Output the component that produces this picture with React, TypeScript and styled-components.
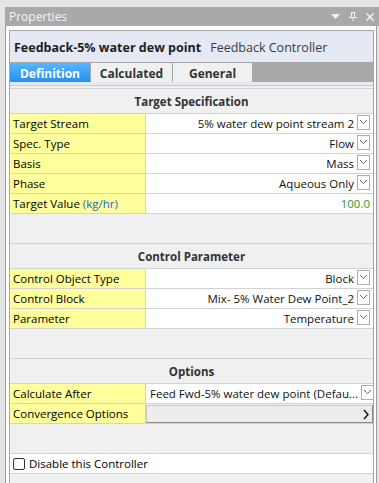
import React from "react";
import styled, { createGlobalStyle } from "styled-components";

const FONT = `"Open Sans", "Noto Sans", sans-serif`;

const Global = createGlobalStyle`
  html, body { margin: 0; padding: 0; background: #e4e4e4; }
  body { font-family: ${FONT}; font-size: 11.5px; color: #000; }
  * { box-sizing: border-box; }
`;

const Page = styled.div`
  width: 379px;
  height: 483px;
  padding: 7px 0 0 5px;
  background: #e4e4e4;
  overflow: hidden;
`;

const TitleBar = styled.div`
  height: 19px;
  background: #a9a9a9;
  color: #f6f6f6;
  display: flex;
  align-items: center;
  padding: 0 5px 0 4px;
  font-size: 12px;
`;

const TitleText = styled.span`
  flex: 1;
`;

const TitleIcons = styled.div`
  display: flex;
  align-items: center;
  gap: 9px;
`;

const Panel = styled.div`
  width: 372px;
  height: 457px;
  background: #fff;
  border-left: 1px solid #9c9c9c;
  border-right: 1px solid #9c9c9c;
  padding: 4px 2px 0 3px;
  display: flex;
  flex-direction: column;
`;

const HeaderBox = styled.div`
  border: 1px solid #a6a6a6;
  border-bottom: none;
  background: #e4e9f4;
  padding-bottom: 3px;
`;

const HeaderTitle = styled.div`
  height: 31px;
  display: flex;
  align-items: center;
  padding: 1px 0 0 4px;
  gap: 9px;
  font-size: 12.5px;
`;

const BoldName = styled.span`
  font-weight: 700;
  color: #1e1e1e;
`;

const SubName = styled.span`
  color: #3c3c3c;
`;

const Tabs = styled.div`
  display: flex;
  height: 20px;
  background: #a9a9a9;
  border-top: 1px solid #a6a6a6;
`;

const Tab = styled.div<{ $active?: boolean; $w: number }>`
  width: ${(p) => p.$w}px;
  display: flex;
  align-items: center;
  justify-content: center;
  padding-top: 1px;
  font-weight: 700;
  font-size: 12px;
  color: ${(p) => (p.$active ? "#fff" : "#333")};
  background: ${(p) =>
    p.$active ? "linear-gradient(#56b6ff, #2590f2)" : "#f0f0f0"};
  border-right: 1px solid #a6a6a6;
`;

const Content = styled.div`
  flex: 1;
  background: #f0f0f0;
  border-left: 1px solid #a6a6a6;
  border-right: 1px solid #a6a6a6;
  border-top: 1px solid #c9c9c9;
  padding-top: 2px;
  display: flex;
  flex-direction: column;
`;

const Section = styled.div<{ $first?: boolean }>`
  margin-top: ${(p) => (p.$first ? 0 : 29)}px;
  border-top: 1px solid #d2d2d2;
`;

const SectionHeader = styled.div`
  height: 25px;
  display: flex;
  align-items: center;
  justify-content: center;
  font-weight: 700;
  color: #333;
  border-bottom: 1px solid #d2d2d2;
`;

const Row = styled.div`
  display: grid;
  grid-template-columns: 136px 1fr;
  height: 20px;
  border-bottom: 1px solid #d2d2d2;
`;

const Label = styled.div`
  background: #ffff9c;
  border-right: 1px solid #d2d2d2;
  display: flex;
  align-items: center;
  padding-left: 3px;
  white-space: nowrap;
`;

const Unit = styled.span`
  color: #1e64d2;
`;

const Value = styled.div<{ $align?: "left" | "right" }>`
  background: #fff;
  display: flex;
  align-items: center;
  justify-content: ${(p) => (p.$align === "left" ? "flex-start" : "flex-end")};
  padding: 0 3px 0 ${(p) => (p.$align === "left" ? 4 : 0)}px;
  min-width: 0;
  white-space: nowrap;
  color: #111;
`;

const ValueText = styled.span<{ $grow?: boolean }>`
  flex: ${(p) => (p.$grow ? 1 : "none")};
`;

const NumberText = styled.span`
  color: #1f9a1f;
`;

const DropButton = styled.div`
  width: 13px;
  height: 15px;
  margin-left: 3px;
  margin-bottom: 3px;
  border: 1px solid #adadad;
  background: #fff;
  display: flex;
  align-items: center;
  justify-content: center;
  flex: none;
`;

const MoreButton = styled.div`
  background: #ececec;
  border: 1px solid #c8c8c8;
  border-right-color: #8c8c8c;
  border-bottom-color: #8c8c8c;
  display: flex;
  align-items: center;
  justify-content: flex-end;
  padding-right: 3px;
  margin: 1px 0 0 0;
`;

const CheckRow = styled.div`
  margin-top: 29px;
  height: 21px;
  background: #fff;
  border-top: 1px solid #d2d2d2;
  border-bottom: 1px solid #d2d2d2;
  display: flex;
  align-items: center;
  padding-left: 3px;
  gap: 4px;
`;

const CheckBox = styled.div`
  width: 12px;
  height: 12px;
  border: 1px solid #333;
  border-radius: 2px;
  background: #fff;
`;

const Chevron = () => (
  <svg width="9" height="6" viewBox="0 0 9 6">
    <polyline points="1,1 4.5,4.5 8,1" fill="none" stroke="#666" strokeWidth="1" />
  </svg>
);

const RightArrow = () => (
  <svg width="6" height="11" viewBox="0 0 6 11">
    <polyline points="1,1 5,5.5 1,10" fill="none" stroke="#111" strokeWidth="1.4" />
  </svg>
);

const DropdownTri = () => (
  <svg width="9" height="5" viewBox="0 0 9 5">
    <polygon points="0,0 9,0 4.5,5" fill="#f4f4f4" />
  </svg>
);

const PinIcon = () => (
  <svg width="8" height="9" viewBox="0 0 8 9">
    <rect x="2.5" y="0.5" width="3" height="5" fill="none" stroke="#f4f4f4" />
    <line x1="0" y1="5.5" x2="8" y2="5.5" stroke="#f4f4f4" />
    <line x1="4" y1="5.5" x2="4" y2="9" stroke="#f4f4f4" />
  </svg>
);

const CloseIcon = () => (
  <svg width="8" height="8" viewBox="0 0 8 8">
    <path d="M0.5 0.5 L7.5 7.5 M7.5 0.5 L0.5 7.5" stroke="#f4f4f4" strokeWidth="1.5" />
  </svg>
);

type RowDef = {
  label: React.ReactNode;
  value: React.ReactNode;
  kind?: "drop" | "number" | "dropLeft" | "more";
};

const renderRow = (r: RowDef, i: number) => {
  let cell: React.ReactNode;
  if (r.kind === "number") {
    cell = (
      <Value>
        <NumberText>{r.value}</NumberText>
      </Value>
    );
  } else if (r.kind === "dropLeft") {
    cell = (
      <Value $align="left">
        <ValueText $grow>{r.value}</ValueText>
        <DropButton>
          <Chevron />
        </DropButton>
      </Value>
    );
  } else if (r.kind === "more") {
    cell = (
      <MoreButton>
        <RightArrow />
      </MoreButton>
    );
  } else {
    cell = (
      <Value>
        <ValueText>{r.value}</ValueText>
        <DropButton>
          <Chevron />
        </DropButton>
      </Value>
    );
  }
  return (
    <Row key={i}>
      <Label>{r.label}</Label>
      {cell}
    </Row>
  );
};

const sections: { title: string; rows: RowDef[] }[] = [
  {
    title: "Target Specification",
    rows: [
      { label: "Target Stream", value: "5% water dew point stream 2" },
      { label: "Spec. Type", value: "Flow" },
      { label: "Basis", value: "Mass" },
      { label: "Phase", value: "Aqueous Only" },
      {
        label: (
          <>
            Target Value&nbsp;<Unit>(kg/hr)</Unit>
          </>
        ),
        value: "100.0",
        kind: "number",
      },
    ],
  },
  {
    title: "Control Parameter",
    rows: [
      { label: "Control Object Type", value: "Block" },
      { label: "Control Block", value: "Mix- 5% Water Dew Point_2" },
      { label: "Parameter", value: "Temperature" },
    ],
  },
  {
    title: "Options",
    rows: [
      {
        label: "Calculate After",
        value: "Feed Fwd-5% water dew point (Defau...",
        kind: "dropLeft",
      },
      { label: "Convergence Options", value: "", kind: "more" },
    ],
  },
];

export default function App() {
  return (
    <Page>
      <Global />
      <TitleBar>
        <TitleText>Properties</TitleText>
        <TitleIcons>
          <DropdownTri />
          <PinIcon />
          <CloseIcon />
        </TitleIcons>
      </TitleBar>
      <Panel>
        <HeaderBox>
          <HeaderTitle>
            <BoldName>Feedback-5% water dew point</BoldName>
            <SubName>Feedback Controller</SubName>
          </HeaderTitle>
          <Tabs>
            <Tab $active $w={81}>Definition</Tab>
            <Tab $w={82}>Calculated</Tab>
            <Tab $w={80}>General</Tab>
          </Tabs>
        </HeaderBox>
        <Content>
          {sections.map((s, si) => (
            <Section key={s.title} $first={si === 0}>
              <SectionHeader>{s.title}</SectionHeader>
              {s.rows.map(renderRow)}
            </Section>
          ))}
          <CheckRow>
            <CheckBox />
            <span>Disable this Controller</span>
          </CheckRow>
        </Content>
      </Panel>
    </Page>
  );
}
